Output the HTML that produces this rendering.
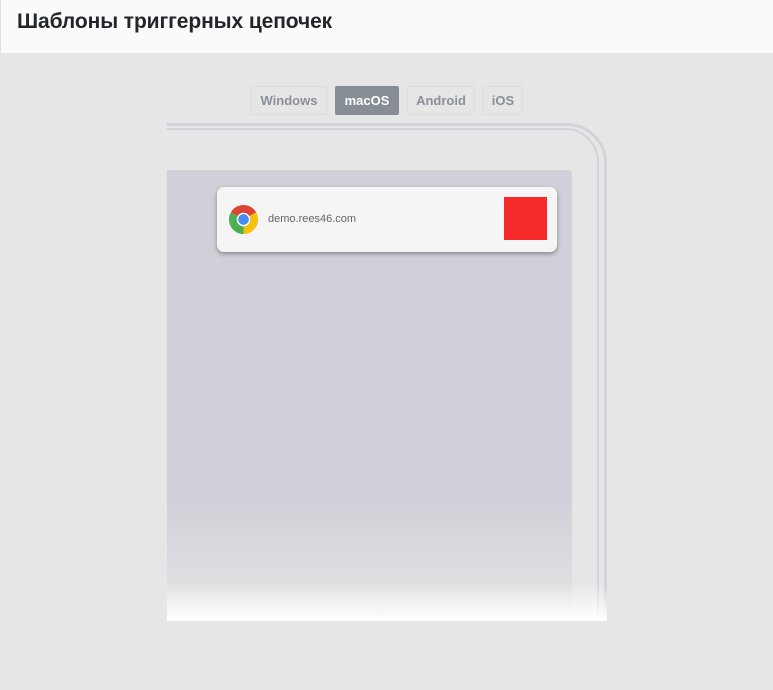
<!DOCTYPE html>
<html><head><meta charset="utf-8"><style>
*{margin:0;padding:0;box-sizing:border-box}
html{width:773px;height:690px;overflow:hidden}
body{width:773px;height:690px;background:#e6e6e6;font-family:"Liberation Sans",sans-serif;position:relative;overflow:hidden}
.hdr{position:absolute;left:0;top:0;width:773px;height:53px;background:#fafafa;border-left:1px solid #e2e2e2}
.hdr h1{position:absolute;left:16px;top:10px;font-size:21px;font-weight:bold;color:#22262b;letter-spacing:-0.1px}
.tab{position:absolute;top:86px;height:29px;border:1px solid #dcdcdf;border-radius:2px;font-size:13px;font-weight:bold;color:#8a9099;text-align:center;line-height:27px}
.tab.on{background:#878d94;color:#fff;border-color:#878d94}
.frame{position:absolute;left:167px;top:123px;width:440px;height:498px;overflow:hidden}
.o{position:absolute;left:-40px;top:0;width:480px;height:600px;border:3px solid #d2d2d9;border-radius:40px}
.i{position:absolute;left:-40px;top:5px;width:472px;height:600px;border:2px solid #d2d2d9;border-radius:34px}
.scr{position:absolute;left:0;top:47px;width:405px;height:451px;background:linear-gradient(#d0d0d8 0,#d0d0d8 330px,#e2e2e4 430px);border-radius:0 3px 0 0}
.fade{position:absolute;left:0;top:460px;width:440px;height:38px;background:linear-gradient(rgba(255,255,255,0),#fff)}
.n{position:absolute;left:217px;top:187px;width:340px;height:65px;background:#f5f5f5;border-radius:7px;box-shadow:0 2px 5px rgba(0,0,0,.35)}
.n span{position:absolute;left:51px;top:26px;font-size:11px;color:#666}
.red{position:absolute;left:287px;top:10px;width:43px;height:43px;background:#f62a2a}
</style></head><body>
<div class="hdr"><h1>Шаблоны триггерных цепочек</h1></div>
<div class="tab" style="left:251px;width:76px">Windows</div>
<div class="tab on" style="left:335px;width:64px">macOS</div>
<div class="tab" style="left:407px;width:68px">Android</div>
<div class="tab" style="left:483px;width:40px">iOS</div>
<div class="frame"><div class="o"></div><div class="i"></div><div class="scr"></div><div class="fade"></div></div>
<div class="n">
<svg style="position:absolute;left:11px;top:17px" width="31" height="31" viewBox="0 0 32 32">
<path d="M16 16 L16 1 A15 15 0 0 1 29 8.5 Z" fill="#db4437"/>
<path d="M16 16 L3 8.5 A15 15 0 0 1 16 1 Z" fill="#db4437"/>
<path d="M16 16 L29 8.5 A15 15 0 0 1 16 31 Z" fill="#f4c20d"/>
<path d="M16 16 L16 31 A15 15 0 0 1 3 8.5 Z" fill="#4caf50"/>
<circle cx="16" cy="16" r="7" fill="#fff"/><circle cx="16" cy="16" r="5.5" fill="#4a8af4"/></svg>
<span>demo.rees46.com</span><div class="red"></div></div>
</body></html>
